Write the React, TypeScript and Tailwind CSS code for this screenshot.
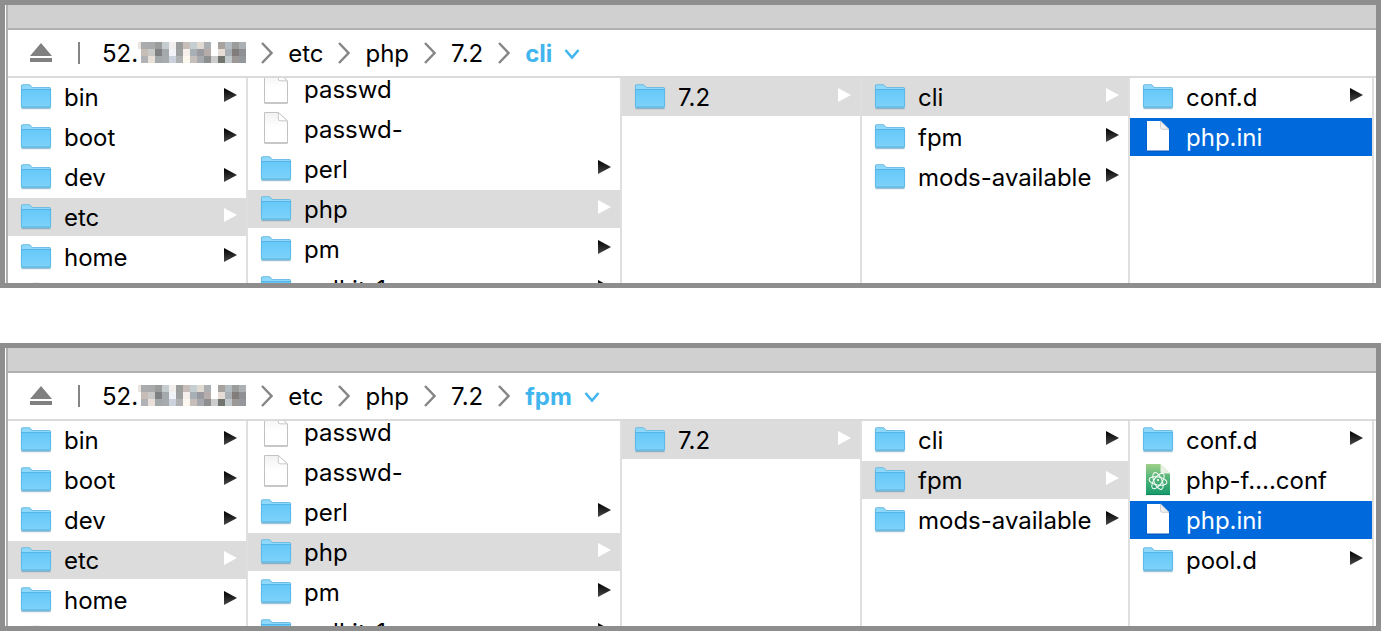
import { useId } from "react";
import clsx from "clsx";

type Kind = "folder" | "file" | "atom" | "disc";
type State = "none" | "path" | "active";
interface Entry {
  name: string;
  kind: Kind;
  state?: State;
}
interface ColumnData {
  label: string;
  scrolled?: boolean;
  entries: Entry[];
}

const MOSAIC = [
  ["#a9abad", "#a9aaab", "#9b9d9c", "#c5cdd0", "#f2eeee", "#9a9d9b", "#c7beba", "#c5ced0", "#e1dad2", "#adb0b3", "#ffffff", "#a8a29e", "#b3bcc1", "#9a9c9b", "#aab0b4"],
  ["#c7bdb7", "#c9cac8", "#7e8081", "#a4a9ac", "#f2f3f8", "#9ba09f", "#f7efeb", "#a8b0b5", "#989a9f", "#b5acab", "#ffffff", "#e4dcd5", "#a8b0b5", "#827d7b", "#8f9093"],
  ["#b0b2b6", "#e9e0d9", "#a2a7aa", "#a8abae", "#ccd2dd", "#aeb0b1", "#fdf8ef", "#c5beba", "#a6a9ae", "#8d8f91", "#cccccc", "#72746f", "#c2c9cc", "#9b9895", "#94979b"],
];

function Mosaic() {
  return (
    <svg width="108" height="21" viewBox="0 0 108 21" className="mb-[3px]" shapeRendering="crispEdges" aria-hidden="true">
      <rect width="3" height="7" fill="#ebe3dd" />
      {MOSAIC.map((row, y) =>
        row.map((fill, x) => <rect key={`${x}-${y}`} x={3 + x * 7} y={y * 7} width="7" height="7" fill={fill} />),
      )}
    </svg>
  );
}

function FolderIcon() {
  const id = useId();
  return (
    <svg width="32" height="26" viewBox="0 0 32 26" aria-hidden="true">
      <defs>
        <linearGradient id={id} x1="0" y1="0" x2="0" y2="1">
          <stop offset="0" stopColor="#66c8f8" />
          <stop offset="1" stopColor="#7ed3fb" />
        </linearGradient>
      </defs>
      <path d="M1.5 24.8H30.5" stroke="#000" strokeOpacity=".14" strokeWidth="1.2" />
      <path d="M1 2Q1 .5 2.5.5H9Q10 .5 10.8 1.6L11.5 2.6Q12 3.3 13 3.3H29.5Q31 3.3 31 4.8V23H1Z" fill="#8ed9fb" />
      <path d="M1.4 5V2Q1.4.7 2.5.7H9Q10 .7 10.8 1.8L11.5 2.8Q12 3.5 13 3.5H29.5Q30.6 3.5 30.6 4.8" fill="none" stroke="#62b4dc" strokeWidth=".8" />
      <path d="M1 5.5H31V23Q31 24 30 24H2Q1 24 1 23Z" fill={`url(#${id})`} />
      <path d="M1 5.5H31" stroke="#56b5e6" strokeWidth="1" />
      <path d="M1.4 5V23M30.6 5V23" stroke="#54b3e4" strokeWidth=".8" />
      <path d="M1.5 22.5H30.5" stroke="#6cc0ea" strokeWidth="1" />
      <path d="M1.5 24H30.5" stroke="#5aa2c8" strokeWidth="1" />
    </svg>
  );
}

function FileIcon({ active }: { active: boolean }) {
  const id = useId();
  return (
    <svg width="26" height="36" viewBox="0 0 26 36" aria-hidden="true">
      <defs>
        <linearGradient id={id} x1="0" y1="0" x2="0" y2="1">
          <stop offset="0" stopColor="#f2f2f2" />
          <stop offset=".5" stopColor="#ffffff" />
        </linearGradient>
      </defs>
      {active ? (
        <>
          <path d="M1.6 2.5H15.5L24.4 11V32.8H1.6Z" fill="#003f96" fillOpacity=".4" />
          <path d="M2 2H15.5L24 10.5V31.5H2Z" fill="#fff" />
          <path d="M15.5 2V8.5Q15.5 10.3 17.3 10.3H24Z" fill="#f0f0f0" stroke="#c4c4c4" strokeWidth=".8" />
        </>
      ) : (
        <>
          <path d="M1.5 1.5H15.5L24.5 10V32H1.5Z" fill={`url(#${id})`} stroke="#c2c2c2" strokeWidth="1" />
          <path d="M15.3 1.6V8Q15.3 9.8 17 9.8H24.3Z" fill="#fff" stroke="#c9c9c9" strokeWidth="1" />
          <path d="M1.5 32H24.5" stroke="#adadad" strokeWidth="1" />
        </>
      )}
    </svg>
  );
}

function AtomFileIcon() {
  const id = useId();
  return (
    <svg width="26" height="34" viewBox="0 0 26 34" aria-hidden="true">
      <defs>
        <linearGradient id={id} x1="0" y1="0" x2="0" y2="1">
          <stop offset="0" stopColor="#9fd088" />
          <stop offset=".4" stopColor="#5bb87a" />
          <stop offset="1" stopColor="#159a6b" />
        </linearGradient>
      </defs>
      <path d="M1 1H15.5L25 10.5V32H1Z" fill={`url(#${id})`} />
      <path d="M1 31.6H25" stroke="#0c7f57" strokeWidth=".8" />
      <path d="M15.5 1V9Q15.5 10.5 17 10.5H25Z" fill="#e8f1e2" />
      <g fill="none" stroke="#fff" strokeWidth="1">
        <ellipse cx="13" cy="18" rx="9" ry="4" transform="rotate(10 13 18)" />
        <ellipse cx="13" cy="18" rx="9" ry="4" transform="rotate(66 13 18)" />
        <ellipse cx="13" cy="18" rx="9" ry="4" transform="rotate(126 13 18)" />
      </g>
      <circle cx="13" cy="17" r="1.1" fill="#fff" />
    </svg>
  );
}

function DiscIcon() {
  return (
    <svg width="26" height="34" viewBox="0 0 26 34" aria-hidden="true">
      <circle cx="13" cy="15" r="12.5" fill="#f4f4f4" stroke="#ececec" />
    </svg>
  );
}

function Arrow({ light }: { light: boolean }) {
  const id = useId();
  return (
    <svg width="13" height="14" viewBox="0 0 13 14" className="mb-1 shrink-0" aria-hidden="true">
      <defs>
        <linearGradient id={id} x1="0" y1="0" x2="0" y2="1">
          <stop offset="0" stopColor="#000" />
          <stop offset="1" stopColor="#4a4a4a" />
        </linearGradient>
      </defs>
      <path d="M0 0L13 7L0 14Z" fill={light ? "#fff" : `url(#${id})`} />
    </svg>
  );
}

function Row({ entry }: { entry: Entry }) {
  const state = entry.state ?? "none";
  return (
    <li>
      <button
        type="button"
        aria-label={entry.name || "Disc image"}
        className={clsx(
          "flex h-[38px] w-full items-center pr-[9px] pl-3 text-left",
          state === "path" && "bg-[#dcdcdc]",
          state === "active" && "bg-[#0069dc] text-white",
        )}
      >
        <span className="mr-3 flex w-8 shrink-0 justify-center pb-px">
          {entry.kind === "folder" && <FolderIcon />}
          {entry.kind === "file" && <FileIcon active={state === "active"} />}
          {entry.kind === "atom" && <AtomFileIcon />}
          {entry.kind === "disc" && <DiscIcon />}
        </span>
        <span className="grow pt-[2px] whitespace-nowrap">{entry.name}</span>
        {entry.kind === "folder" && <Arrow light={state === "path"} />}
      </button>
    </li>
  );
}

function Column({ column }: { column: ColumnData }) {
  return (
    <ul
      aria-label={column.label}
      className={clsx(
        "flex min-w-0 flex-col gap-[2px] overflow-hidden border-r-2 border-[#dfdfdf]",
        column.scrolled && "[&>li:first-child]:-mt-2",
      )}
    >
      {column.entries.map((entry) => (
        <Row key={entry.name} entry={entry} />
      ))}
    </ul>
  );
}

function Separator() {
  return (
    <svg width="12" height="22" viewBox="0 0 12 22" className="mx-[15px] shrink-0" aria-hidden="true">
      <path d="M1 1L10.5 11L1 21" fill="none" stroke="#858585" strokeWidth="2.4" />
    </svg>
  );
}

function PathBar({ current }: { current: string }) {
  return (
    <nav aria-label="Path" className="flex h-12 items-center border-b-2 border-[#dadada] pl-[22px]">
      <button type="button" aria-label="Eject">
        <svg width="22" height="20" viewBox="0 0 22 20" aria-hidden="true">
          <path d="M11 0L22 13H0Z M0 15H22V19H0Z" fill="#808080" />
        </svg>
      </button>
      <span className="mr-[22px] ml-[26px] h-[22px] w-[2px] bg-[#858585]" />
      <a href="#" className="flex items-center pt-[2px]">
        52.
        <Mosaic />
      </a>
      <Separator />
      <a href="#" className="pt-[2px]">etc</a>
      <Separator />
      <a href="#" className="pt-[2px]">php</a>
      <Separator />
      <a href="#" className="pt-[2px]">7.2</a>
      <Separator />
      <button type="button" className="flex items-center gap-3 pt-[2px] font-bold text-[#41b5ed]">
        {current}
        <svg width="16" height="12" viewBox="0 0 16 12" aria-hidden="true">
          <path d="M1.5 2L8 9.5L14.5 2" fill="none" stroke="#41b5ed" strokeWidth="2.6" />
        </svg>
      </button>
    </nav>
  );
}

function Browser({ current, columns }: { current: string; columns: ColumnData[] }) {
  return (
    <section className="border-5 border-[#8e8e8e] bg-white pl-px">
      <div className="border-l-2 border-[#b0b0b0]">
        <div className="h-[25px] border-b-2 border-[#b0b0b0] bg-[#d0d0d0]" />
        <PathBar current={current} />
        <div className="grid h-[205px] grid-cols-[240fr_374fr_240fr_268fr_244fr] overflow-hidden pr-[2px]">
          {columns.map((column) => (
            <Column key={column.label} column={column} />
          ))}
        </div>
      </div>
    </section>
  );
}

const root: ColumnData = {
  label: "root",
  entries: [
    { name: "bin", kind: "folder" },
    { name: "boot", kind: "folder" },
    { name: "dev", kind: "folder" },
    { name: "etc", kind: "folder", state: "path" },
    { name: "home", kind: "folder" },
    { name: "", kind: "disc" },
  ],
};

const etc: ColumnData = {
  label: "etc",
  scrolled: true,
  entries: [
    { name: "passwd", kind: "file" },
    { name: "passwd-", kind: "file" },
    { name: "perl", kind: "folder" },
    { name: "php", kind: "folder", state: "path" },
    { name: "pm", kind: "folder" },
    { name: "polkit-1", kind: "folder" },
  ],
};

const php: ColumnData = { label: "php", entries: [{ name: "7.2", kind: "folder", state: "path" }] };

const version = (selected: string): ColumnData => ({
  label: "7.2",
  entries: ["cli", "fpm", "mods-available"].map((name) => ({
    name,
    kind: "folder",
    state: name === selected ? "path" : "none",
  })),
});

const cli: ColumnData = {
  label: "cli",
  entries: [
    { name: "conf.d", kind: "folder" },
    { name: "php.ini", kind: "file", state: "active" },
  ],
};

const fpm: ColumnData = {
  label: "fpm",
  entries: [
    { name: "conf.d", kind: "folder" },
    { name: "php-f….conf", kind: "atom" },
    { name: "php.ini", kind: "file", state: "active" },
    { name: "pool.d", kind: "folder" },
  ],
};

export default function App() {
  return (
    <main className="flex flex-col gap-[55px] bg-white font-[Inter,sans-serif] text-2xl text-black">
      <Browser current="cli" columns={[root, etc, php, version("cli"), cli]} />
      <Browser current="fpm" columns={[root, etc, php, version("fpm"), fpm]} />
    </main>
  );
}
